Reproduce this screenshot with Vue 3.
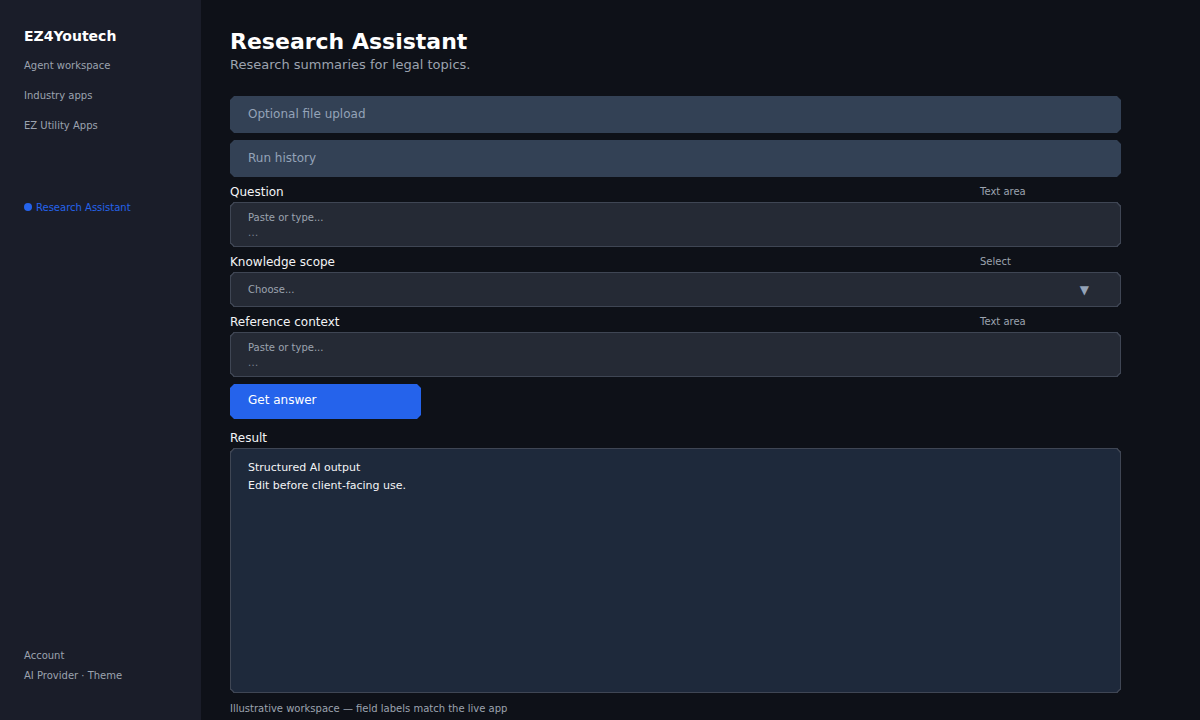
<script setup>
const navLinks = ["Agent workspace", "Industry apps", "EZ Utility Apps"];

const fields = [
  { label: "Question", hint: "Text area", type: "area", placeholder: "Paste or type..." },
  { label: "Knowledge scope", hint: "Select", type: "select", placeholder: "Choose..." },
  { label: "Reference context", hint: "Text area", type: "area", placeholder: "Paste or type..." }
];
</script>

<template>
  <div class="page">
    <aside class="sidebar">
      <div class="brand">EZ4Youtech</div>
      <ul class="nav">
        <li v-for="link in navLinks" :key="link">{{ link }}</li>
      </ul>
      <div class="current"><span class="dot"></span>Research Assistant</div>
      <div class="side-foot">
        <div>Account</div>
        <div>AI Provider · Theme</div>
      </div>
    </aside>

    <main class="main">
      <h1 class="title">Research Assistant</h1>
      <p class="subtitle">Research summaries for legal topics.</p>

      <div class="panel">Optional file upload</div>
      <div class="panel">Run history</div>

      <div v-for="field in fields" :key="field.label" class="field">
        <div class="field-head">
          <span class="field-label">{{ field.label }}</span>
          <span class="field-hint">{{ field.hint }}</span>
        </div>
        <div v-if="field.type === 'area'" class="control control-area">
          <div>{{ field.placeholder }}</div>
          <div class="dots">...</div>
        </div>
        <div v-else class="control control-select">
          <span>{{ field.placeholder }}</span>
          <span class="arrow">▼</span>
        </div>
      </div>

      <button class="run">Get answer</button>

      <div class="result-label">Result</div>
      <div class="result">
        <div>Structured AI output</div>
        <div>Edit before client-facing use.</div>
      </div>

      <div class="foot-note">Illustrative workspace — field labels match the live app</div>
    </main>
  </div>
</template>

<style>
html,
body {
  margin: 0;
  background: #0e1118;
}
</style>

<style scoped>
.page {
  display: flex;
  width: 1200px;
  height: 720px;
  overflow: hidden;
  background: #0e1118;
  font-family: "DejaVu Sans", sans-serif;
  color: #fff;
  opacity: 0.999;
}

/* sidebar */
.sidebar {
  display: flex;
  flex-direction: column;
  box-sizing: border-box;
  width: 201px;
  height: 720px;
  padding: 27px 0 0 24px;
  background: #1a1d29;
}

.brand {
  height: 18px;
  font-size: 14px;
  font-weight: 700;
  line-height: 18px;
}

.nav {
  margin: 6px 0 0;
  padding: 0;
  list-style: none;
  font-size: 10px;
  color: #9ca3af;
}

.nav li {
  height: 30px;
  line-height: 30px;
}

.current {
  margin-top: 60px;
  font-size: 10px;
  line-height: 14px;
  color: #2563eb;
}

.dot {
  display: inline-block;
  width: 8px;
  height: 8px;
  margin-right: 4px;
  border-radius: 50%;
  background: #2563eb;
}

.side-foot {
  margin-top: auto;
  margin-bottom: 34px;
  font-size: 10px;
  line-height: 20px;
  color: #9ca3af;
}

/* main column */
.main {
  box-sizing: border-box;
  width: 891px;
  margin-left: 29px;
  padding-top: 29px;
}

.title {
  margin: 0;
  font-size: 22px;
  font-weight: 700;
  line-height: 26px;
}

.subtitle {
  margin: 1px 0 23px;
  font-size: 13px;
  line-height: 17px;
  color: #9ca3af;
}

.panel {
  box-sizing: border-box;
  height: 37px;
  margin-bottom: 7px;
  padding-left: 18px;
  border-radius: 4px;
  corner-shape: bevel;
  background: #334155;
  font-size: 12px;
  line-height: 37px;
  color: #94a3b8;
}

.field-head {
  display: flex;
  height: 18px;
  align-items: flex-start;
}

.field-label {
  width: 750px;
  font-size: 12px;
  line-height: 16px;
  color: #f3f4f6;
}

.field-hint {
  font-size: 10px;
  line-height: 16px;
  color: #9ca3af;
}

.control {
  box-sizing: border-box;
  margin-bottom: 7px;
  padding-left: 17px;
  border: 1px solid #3f4654;
  border-radius: 4px;
  corner-shape: bevel;
  background: #252a35;
  font-size: 10px;
  color: #9ca3af;
}

.control-area {
  height: 45px;
  padding-top: 7px;
  line-height: 16px;
}

.dots {
  margin-top: -1px;
  letter-spacing: 0.3px;
  color: #7b8494;
}

.control-select {
  display: flex;
  height: 35px;
  align-items: center;
  justify-content: space-between;
  padding-right: 31px;
}

.arrow {
  font-size: 12px;
  color: #94a3b8;
}

.run {
  display: block;
  width: 191px;
  height: 35px;
  margin: 0;
  padding: 0 0 4px 18px;
  border: 0;
  border-radius: 4px;
  corner-shape: bevel;
  background: #2563eb;
  color: #fff;
  font-family: inherit;
  font-size: 12px;
  text-align: left;
}

.result-label {
  height: 16px;
  margin-top: 11px;
  font-size: 12px;
  line-height: 16px;
  color: #f3f4f6;
}

.result {
  box-sizing: border-box;
  height: 245px;
  margin-top: 2px;
  padding: 10px 0 0 17px;
  border: 1px solid #3f4654;
  border-radius: 4px;
  corner-shape: bevel;
  background: #1e293b;
  font-size: 11px;
  line-height: 18px;
  color: #f3f4f6;
}

.foot-note {
  margin-top: 9px;
  font-size: 10px;
  line-height: 14px;
  color: #9ca3af;
}
</style>
